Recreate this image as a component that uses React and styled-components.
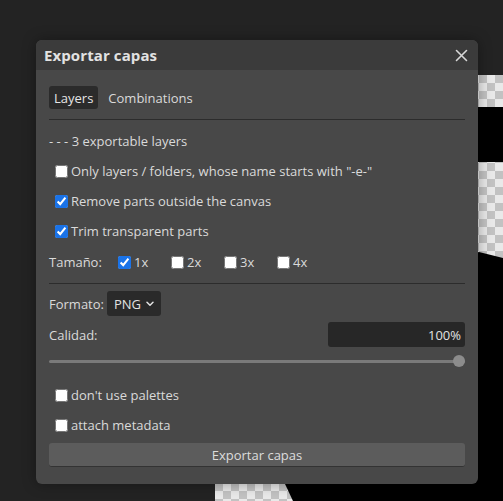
import React from "react";
import styled, { createGlobalStyle } from "styled-components";

const GlobalStyle = createGlobalStyle`
  html, body { margin: 0; padding: 0; background: #232323; }
  body { font-family: "Open Sans", "Liberation Sans", sans-serif; font-size: 13px; color: #d8d8d8; }
  * { box-sizing: border-box; }
`;

const Stage = styled.div`
  position: relative;
  width: 503px;
  height: 501px;
  overflow: hidden;
  background: #232323;
`;

const Checker = styled.div`
  position: absolute;
  left: 215px;
  top: 75px;
  width: 288px;
  height: 426px;
  background-color: #e9e9e9;
  background-image: repeating-conic-gradient(#c2c2c2 0% 25%, #e9e9e9 0% 50%);
  background-size: 16px 16px;
  background-position: 0 0;
`;

const BlackShape = styled.div`
  position: absolute;
  left: 0;
  top: 0;
  width: 503px;
  height: 501px;
  background: #000000;
  clip-path: ${(p) => p.$clip};
`;

const Dialog = styled.div`
  position: absolute;
  left: 36px;
  top: 40px;
  width: 442px;
  background: #484848;
  border-radius: 6px;
  overflow: hidden;
  box-shadow: 0 0 14px rgba(0, 0, 0, 0.35);
  display: flex;
  flex-direction: column;
`;

const TitleBar = styled.div`
  height: 30px;
  background: #3b3b3b;
  display: flex;
  align-items: center;
  justify-content: space-between;
  padding: 0 8px 0 8px;
`;

const Title = styled.div`
  font-weight: 700;
  font-size: 15px;
  color: #e2e2e2;
  letter-spacing: 0.1px;
`;

const CloseButton = styled.div`
  width: 16px;
  height: 16px;
  display: flex;
  align-items: center;
  justify-content: center;
  margin-right: 1px;
`;

const Body = styled.div`
  padding: 16px 13px 17px 13px;
  display: flex;
  flex-direction: column;
`;

const Tabs = styled.div`
  display: flex;
  height: 23px;
  gap: 5px;
`;

const Tab = styled.div`
  padding: 0 5px;
  height: 23px;
  display: flex;
  align-items: center;
  border-radius: 3px;
  background: ${(p) => (p.$active ? "#2b2b2b" : "transparent")};
  color: ${(p) => (p.$active ? "#e6e6e6" : "#dadada")};
  font-size: 13px;
`;

const Divider = styled.div`
  height: 1px;
  background: #2c2c2c;
  margin: ${(p) => p.$margin};
`;

const Row = styled.div`
  height: 30px;
  display: flex;
  align-items: center;
  padding-left: ${(p) => (p.$indent ? "6px" : "0")};
  margin-top: ${(p) => p.$mt || "0"};
`;

const Check = styled.input.attrs({ type: "checkbox", readOnly: true })`
  width: 13px;
  height: 13px;
  margin: 0 3px 0 0;
  accent-color: #1a73e8;
`;

const Label = styled.span`
  color: #dadada;
  white-space: nowrap;
`;

const SizeLabel = styled.span`
  color: #dadada;
  width: 69px;
`;

const SizeOption = styled.label`
  display: flex;
  align-items: center;
  width: 53px;
  color: #dadada;
  & > input { margin-right: 3px; }
`;

const FormatRow = styled.div`
  height: 25px;
  display: flex;
  align-items: center;
  gap: 3px;
`;

const Select = styled.div`
  height: 25px;
  background: #2a2a2a;
  border-radius: 3px;
  display: flex;
  align-items: center;
  padding: 0 7px 0 7px;
  gap: 5px;
  color: #e2e2e2;
`;

const QualityRow = styled.div`
  height: 25px;
  margin-top: 6px;
  display: flex;
  align-items: center;
  justify-content: space-between;
`;

const NumberBox = styled.div`
  width: 137px;
  height: 25px;
  background: #272727;
  border-radius: 3px;
  display: flex;
  align-items: center;
  justify-content: flex-end;
  padding-right: 4px;
  color: #e2e2e2;
`;

const Slider = styled.div`
  position: relative;
  height: 14px;
  margin-top: 7px;
  display: flex;
  align-items: center;
`;

const Track = styled.div`
  flex: 1;
  height: 3px;
  border-radius: 2px;
  background: #7a7a7a;
`;

const Thumb = styled.div`
  position: absolute;
  right: 0;
  top: 1px;
  width: 12px;
  height: 12px;
  border-radius: 50%;
  background: #8c8c8c;
`;

const ExportButton = styled.div`
  margin-top: 3px;
  height: 24px;
  border-radius: 3px;
  background: #5c5c5c;
  border-bottom: 1px solid #333;
  display: flex;
  align-items: center;
  justify-content: center;
  color: #dcdcdc;
`;

export default function App() {
  return (
    <>
      <GlobalStyle />
      <Stage>
        <Checker />
        <BlackShape $clip="polygon(420px 107px, 503px 107px, 503px 162px, 420px 162px)" />
        <BlackShape $clip="polygon(300px 300px, 479px 252px, 503px 258px, 503px 501px, 293px 501px, 285px 484px)" />
        <Dialog>
          <TitleBar>
            <Title>Exportar capas</Title>
            <CloseButton>
              <svg width="13" height="13" viewBox="0 0 13 13">
                <path d="M1.5 1.5 L11.5 11.5 M11.5 1.5 L1.5 11.5" stroke="#d8d8d8" strokeWidth="1.6" strokeLinecap="round" />
              </svg>
            </CloseButton>
          </TitleBar>
          <Body>
            <Tabs>
              <Tab $active>Layers</Tab>
              <Tab>Combinations</Tab>
            </Tabs>
            <Divider $margin="10px 0 6px 0" />
            <Row>
              <Label>- - - 3 exportable layers</Label>
            </Row>
            <Row $indent>
              <Check />
              <Label>Only layers / folders, whose name starts with "-e-"</Label>
            </Row>
            <Row $indent>
              <Check defaultChecked />
              <Label>Remove parts outside the canvas</Label>
            </Row>
            <Row $indent>
              <Check defaultChecked />
              <Label>Trim transparent parts</Label>
            </Row>
            <Row $mt="1px">
              <SizeLabel>Tamaño:</SizeLabel>
              <SizeOption><Check defaultChecked />1x</SizeOption>
              <SizeOption><Check />2x</SizeOption>
              <SizeOption><Check />3x</SizeOption>
              <SizeOption><Check />4x</SizeOption>
            </Row>
            <Divider $margin="6px 0 7px 0" />
            <FormatRow>
              <Label>Formato:</Label>
              <Select>
                PNG
                <svg width="8" height="6" viewBox="0 0 8 6">
                  <path d="M1 1.2 L4 4.2 L7 1.2" stroke="#e0e0e0" strokeWidth="1.5" fill="none" strokeLinecap="round" strokeLinejoin="round" />
                </svg>
              </Select>
            </FormatRow>
            <QualityRow>
              <Label>Calidad:</Label>
              <NumberBox>100%</NumberBox>
            </QualityRow>
            <Slider>
              <Track />
              <Thumb />
            </Slider>
            <Row $indent $mt="12px">
              <Check />
              <Label>don't use palettes</Label>
            </Row>
            <Row $indent>
              <Check />
              <Label>attach metadata</Label>
            </Row>
            <ExportButton>Exportar capas</ExportButton>
          </Body>
        </Dialog>
      </Stage>
    </>
  );
}
